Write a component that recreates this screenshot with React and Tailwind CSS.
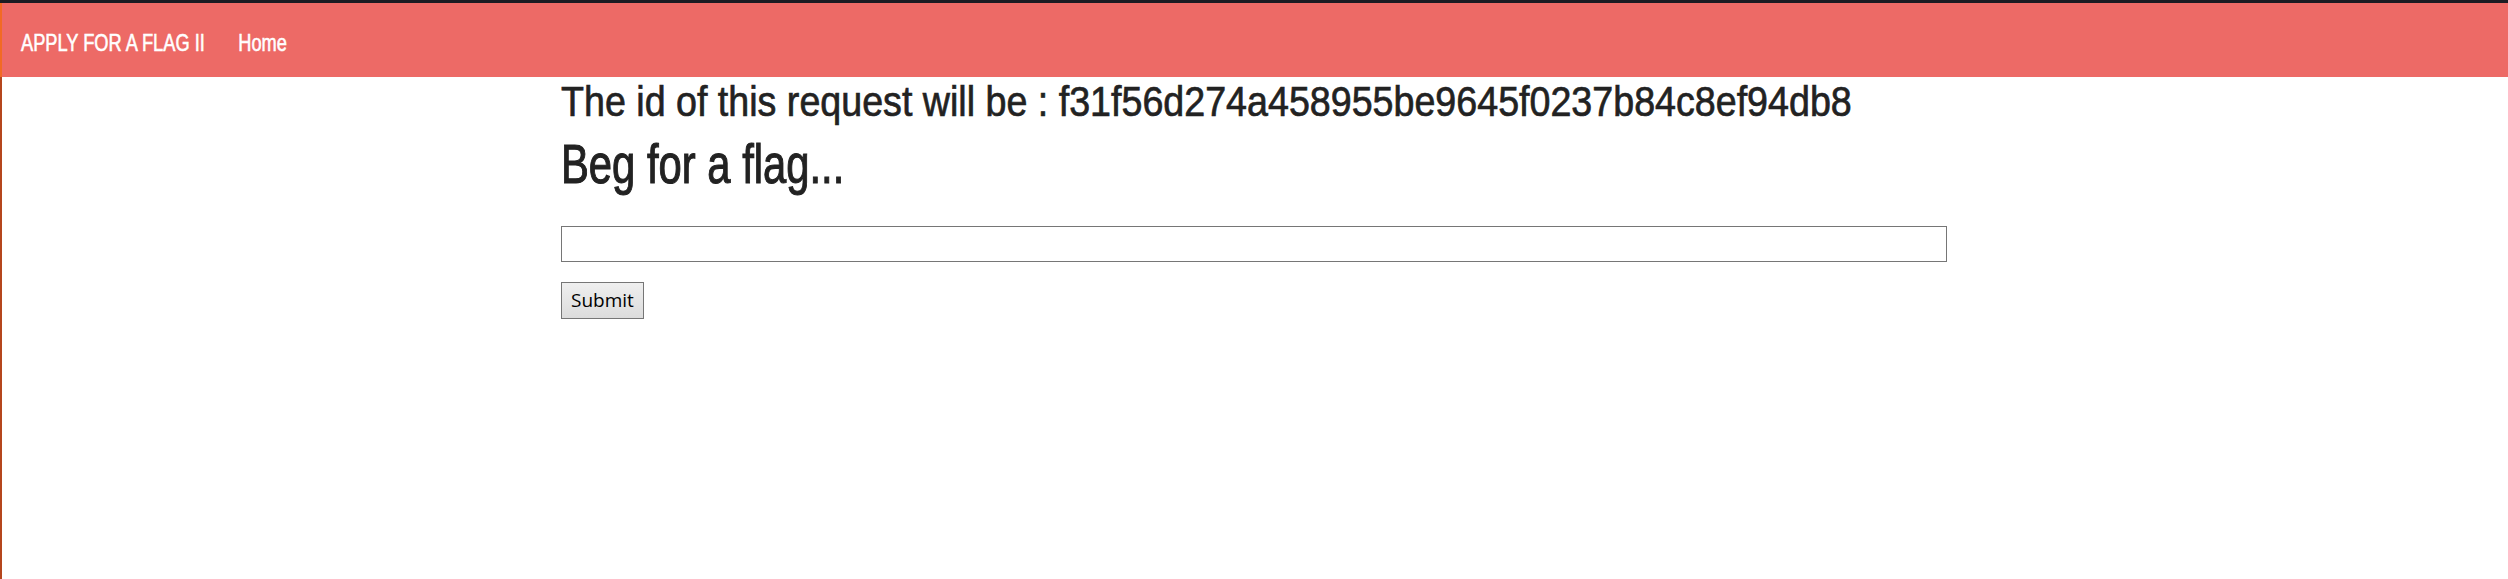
import React from "react";

const sans = { fontFamily: '"Liberation Sans", Arial, sans-serif' };

export default function App() {
  return (
    <div className="min-h-[579px] w-full bg-white flex flex-col" style={sans}>
      <div className="h-[3px] w-full bg-[#1b1b22]" />
      <div className="flex flex-1">
        <div className="w-[2px] flex flex-col">
          <div className="h-[74px] bg-[#f26a24]" />
          <div className="flex-1 bg-[#b5461d]" />
        </div>
        <div className="flex-1 flex flex-col">
          <nav className="h-[74px] bg-[#ed6a66] flex items-center pt-[5px] pl-[19px] text-white text-[24px] leading-none">
            <div className="inline-flex items-center whitespace-nowrap origin-left scale-x-[0.76] [-webkit-text-stroke:0.6px_#ffffff]">
              <span>APPLY FOR A FLAG II</span>
              <span className="ml-[44px]">Home</span>
            </div>
          </nav>
          <main className="w-[1386px] mx-auto -translate-x-[1px] text-[#222222]">
            <p className="mt-[3px] text-[43px] leading-none whitespace-nowrap">
              <span className="inline-block origin-left scale-x-[0.875] [-webkit-text-stroke:0.7px_#222222]">
                The id of this request will be : f31f56d274a458955be9645f0237b84c8ef94db8
              </span>
            </p>
            <h1 className="mt-[13px] text-[56px] leading-none whitespace-nowrap">
              <span className="inline-block origin-left scale-x-[0.746] [-webkit-text-stroke:1.1px_#222222]">Beg for a flag...</span>
            </h1>
            <form className="mt-[34px] flex flex-col items-start">
              <input
                type="text"
                className="w-full h-[36px] border border-[#767676] bg-white outline-none"
              />
              <button
                type="button"
                className="mt-[20px] h-[37px] px-[9px] border border-[#767676] bg-gradient-to-b from-[#efefef] to-[#dcdcdc] text-[19px] text-black leading-none"
                style={{ fontFamily: '"Open Sans", "Noto Sans", sans-serif' }}
              >
                Submit
              </button>
            </form>
          </main>
        </div>
      </div>
    </div>
  );
}
